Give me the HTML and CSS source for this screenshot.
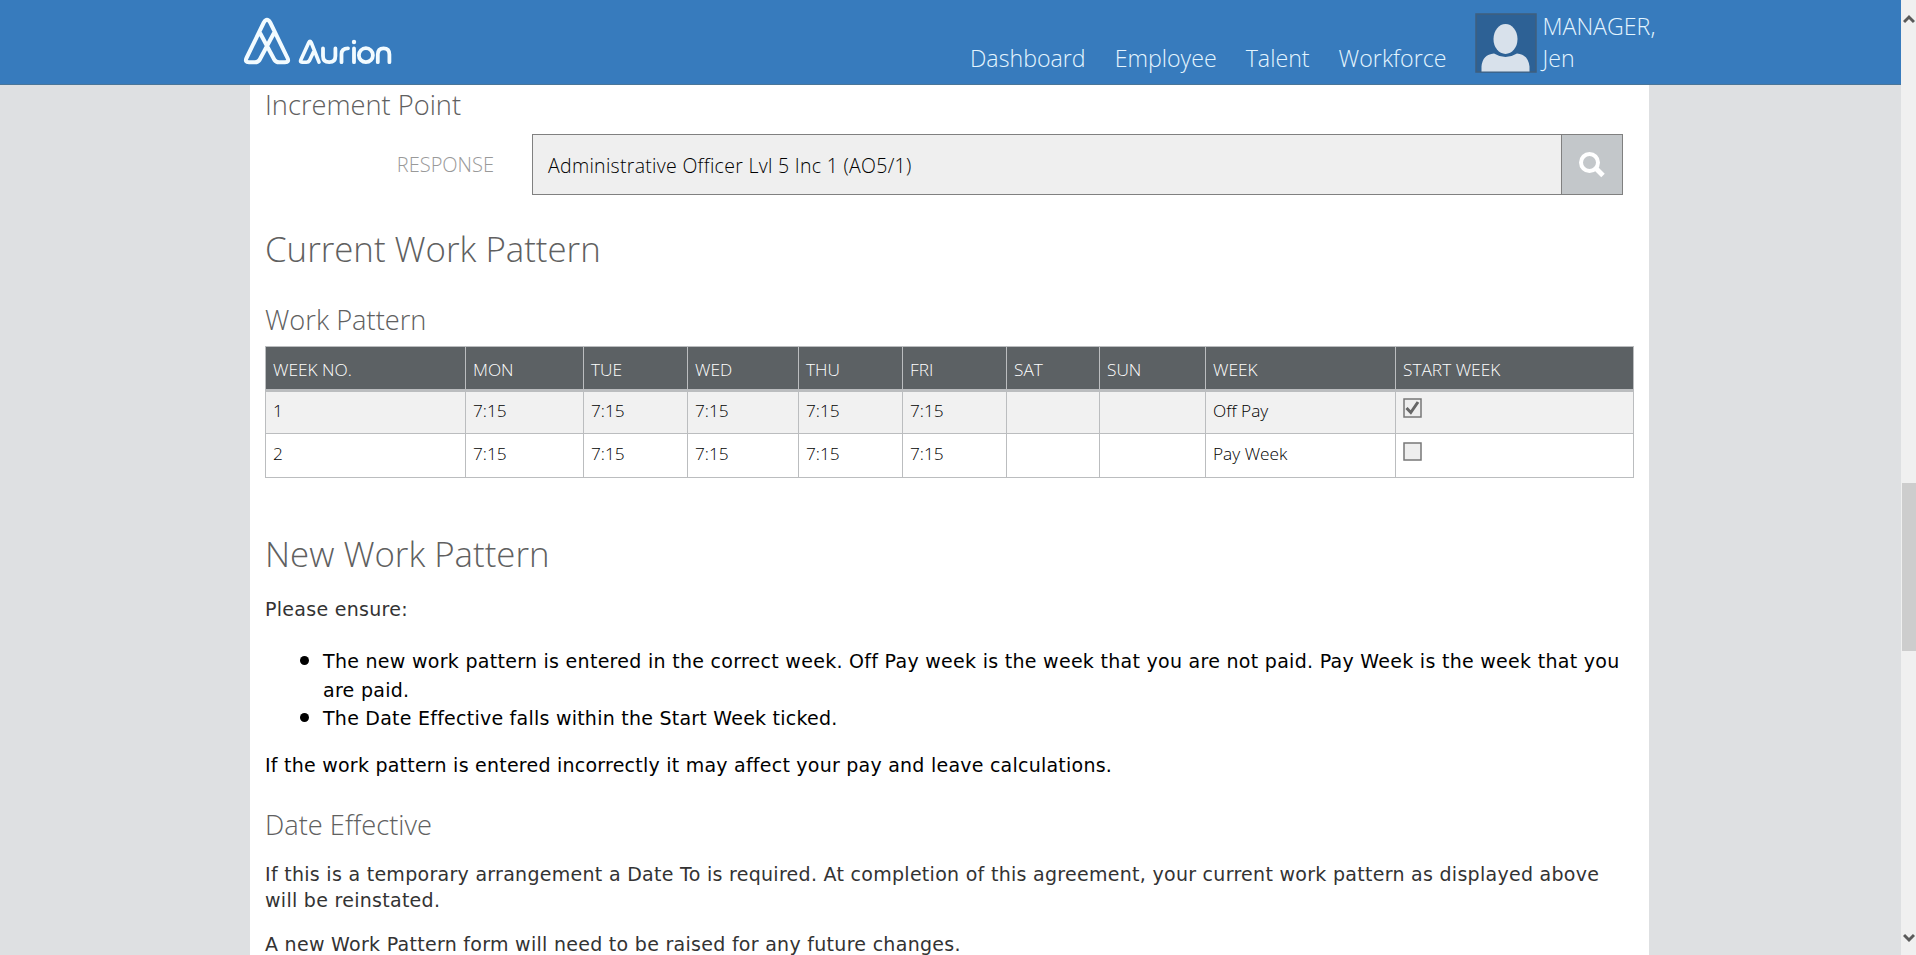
FILE: index.html
```html
<!DOCTYPE html>
<html lang="en">
<head>
<meta charset="utf-8">
<title>Aurion</title>
<link rel="stylesheet" href="styles.css">
</head>
<body>
<div class="window">
  <div class="page">
    <header class="topbar">
      <svg class="logo" width="160" height="56" viewBox="0 0 160 56" fill="none" stroke="#f2fbff" stroke-linecap="round" stroke-linejoin="round" role="img" aria-label="Aurion">
        <path stroke-width="4" d="M17.300 18.500 L31.500 45 Q33 47.200 36 47.200 H42 Q46.500 47.200 44.500 43 L27.200 7.500 Q24 2 20.800 7.500 L3.500 43 Q1.500 47.200 6 47.200 H12 Q15 47.200 16.500 45 L30.700 18.500"/>
        <path stroke-width="3.600" d="M76 47.200 L68.200 27.500 Q67 25 65.800 27.500 L57.800 45 Q56.800 47.200 59 47.200 H63.500 Q65.500 47.200 66.500 45.500 L70.500 37"/>
        <path stroke-width="3.800" d="M80 33.500 V41 Q80 47.200 86.200 47.200 Q92.400 47.200 92.400 41 V33.500 M98.500 47.200 V39 Q98.500 33.300 105 33.300 M111 33.500 V47.200 M134.800 47.200 V39.500 Q134.800 33.300 140.600 33.300 Q146.400 33.300 146.400 39.500 V47.200"/>
        <circle cx="122.900" cy="40.200" r="7" stroke-width="3.800"/>
        <circle cx="111" cy="27" r="2.200" fill="#f2fbff" stroke="none"/>
      </svg>
      <nav class="nav">
        <a>Dashboard</a>
        <a>Employee</a>
        <a>Talent</a>
        <a>Workforce</a>
      </nav>
      <svg class="avatar" width="62" height="60" viewBox="0 0 62 60">
        <rect x="1" y="1" width="60" height="58" fill="#2d6195" stroke="#3f5f7e" stroke-width="1.500"/>
        <ellipse cx="30.500" cy="26" rx="12" ry="15" fill="#d8e1eb"/>
        <path fill="#d8e1eb" d="M6.500 58.500 V53.500 Q7.500 41.500 19 40.500 Q30.500 47.500 42 40.500 Q53 41.500 54.500 53.500 V58.500 Z"/>
      </svg>
      <div class="user">MANAGER,<br>Jen</div>
    </header>
    <main class="panel">
      <h2 class="field-title">Increment Point</h2>
      <div class="field">
        <label class="field-label">RESPONSE</label>
        <div class="lookup">
          <div class="lookup-value">Administrative Officer Lvl 5 Inc 1 (AO5/1)</div>
          <div class="lookup-button">
            <svg width="28" height="28" viewBox="0 0 28 28" fill="none" stroke="#fff"><circle cx="11.500" cy="12.500" r="8.500" stroke-width="4"/><path stroke-width="5" d="M18 18.500 L25 25.500"/></svg>
          </div>
        </div>
      </div>
      <h1 class="section-title current">Current Work Pattern</h1>
      <h2 class="field-title pattern">Work Pattern</h2>
      <table class="grid">
        <colgroup><col class="c1"><col class="c2"><col class="c3"><col class="c4"><col class="c5"><col class="c6"><col class="c7"><col class="c8"><col class="c9"><col class="c10"></colgroup>
        <thead><tr><th>WEEK NO.</th><th>MON</th><th>TUE</th><th>WED</th><th>THU</th><th>FRI</th><th>SAT</th><th>SUN</th><th>WEEK</th><th>START WEEK</th></tr></thead>
        <tbody>
          <tr class="odd"><td>1</td><td>7:15</td><td>7:15</td><td>7:15</td><td>7:15</td><td>7:15</td><td></td><td></td><td>Off Pay</td><td><svg class="check checked" width="19" height="20" viewBox="0 0 19 20"><rect x="1" y="1" width="17" height="18" fill="#eee" stroke="#777" stroke-width="1.500"/><path d="M3.500 10 L7.800 14.500 L15 4" fill="none" stroke="#666" stroke-width="3"/></svg></td></tr>
          <tr class="even"><td>2</td><td>7:15</td><td>7:15</td><td>7:15</td><td>7:15</td><td>7:15</td><td></td><td></td><td>Pay Week</td><td><svg class="check" width="19" height="19" viewBox="0 0 19 19"><rect x="1" y="1" width="17" height="17" fill="#eee" stroke="#777" stroke-width="1.500"/></svg></td></tr>
        </tbody>
      </table>
      <h1 class="section-title new">New Work Pattern</h1>
      <p class="text ensure">Please ensure:</p>
      <ul class="notes">
        <li>The new work pattern is entered in the correct week. Off Pay week is the week that you are not paid. Pay Week is the week that you<br>are paid.</li>
        <li class="short">The Date Effective falls within the Start Week ticked.</li>
      </ul>
      <p class="text strong">If the work pattern is entered incorrectly it may affect your pay and leave calculations.</p>
      <h2 class="field-title date">Date Effective</h2>
      <p class="text temp">If this is a temporary arrangement a Date To is required. At completion of this agreement, your current work pattern as displayed above<br>will be reinstated.</p>
      <p class="text">A new Work Pattern form will need to be raised for any future changes.</p>
    </main>
  </div>
  <div class="scrollbar">
    <svg width="12" height="10" viewBox="0 0 12 10" fill="none" stroke="#5a5a5a" stroke-width="3"><path d="M1 8 L6 3 L11 8"/></svg>
    <div class="thumb"></div>
    <svg class="down" width="12" height="10" viewBox="0 0 12 10" fill="none" stroke="#5a5a5a" stroke-width="3"><path d="M1 2 L6 7 L11 2"/></svg>
  </div>
</div>
</body>
</html>
```

FILE: styles.css
```css
* { box-sizing: border-box; }
body { margin: 0; background: #dee0e2; font-family: "Open Sans", sans-serif; font-weight: 300; }
.window { display: flex; width: 1916px; height: 955px; overflow: hidden; }
.page { width: 1901px; height: 955px; overflow: hidden; }
.topbar { display: flex; height: 85px; background: #377bbd; border-bottom: 1px solid #4a7699; color: #e4f5ff; font-size: 23.2px; }
.logo { flex: none; margin: 15px 0 0 243px; }
.nav { display: flex; gap: 29px; margin-left: 567px; padding-top: 42px; line-height: 32px; }
.avatar { flex: none; margin: 13px 0 0 29px; }
.user { margin-left: 5px; padding-top: 10px; font-size: 23.2px; line-height: 32px; }
.panel { width: 1399px; height: 870px; margin-left: 250px; padding: 2px 15px 0; background: #fff; }
h1, h2, p, ul { margin: 0; font-weight: 300; }
.field-title { height: 36px; font-size: 27.25px; line-height: 36px; color: #606060; white-space: nowrap; }
.field { display: flex; margin-top: 11px; height: 61px; }
.field-label { width: 267px; padding-right: 38px; text-align: right; font-size: 20px; line-height: 62px; color: #999; }
.lookup { display: flex; width: 1091px; border: 1.5px solid #808080; }
.lookup-value { flex: 1; padding-left: 15px; background: #efefef; font-size: 19.5px; letter-spacing: .29px; line-height: 61px; color: #000; }
.lookup-button { width: 61px; padding: 15px 16px; background: #c3c7ca; border-left: 1px solid #808080; }
.section-title { font-size: 34.8px; height: 48px; line-height: 48px; color: #606060; white-space: nowrap; }
.current { margin-top: 30px; }
.pattern { margin-top: 29px; }
.grid { margin-top: 8px; width: 1368px; table-layout: fixed; border-collapse: collapse; font-size: 17.3px; }
.grid th, .grid td { padding: 0 0 0 7px; text-align: left; vertical-align: top; font-weight: 300; border: 1px solid #bbbdbf; white-space: nowrap; }
.grid th { height: 44px; padding-top: 10px; line-height: 26px; background: #5c6164; color: #fff; border-bottom: 3px solid #bbbdbf; }
.grid td { height: 43px; padding-top: 7px; line-height: 24px; color: #000; }
.grid .even td { height: 44px; padding-top: 8px; }
.odd { background: #f1f1f1; }
.check { display: block; }
.checked { margin-top: -1px; }
.c1 { width: 200px; } .c2 { width: 118px; } .c3 { width: 104px; } .c4 { width: 111px; } .c5 { width: 104px; }
.c6 { width: 104px; } .c7 { width: 93px; } .c8 { width: 106px; } .c9 { width: 190px; } .c10 { width: 238px; }
.new { margin-top: 52px; }
.text, .notes { font-family: "DejaVu Sans", sans-serif; font-weight: 400; font-size: 19px; letter-spacing: .285px; line-height: 26px; color: #333; white-space: nowrap; }
.ensure { margin-top: 18px; }
.notes { margin-top: 25px; padding-left: 58px; color: #000; line-height: 28.7px; list-style: none; }
.notes li { position: relative; }
.notes .short { letter-spacing: .24px; }
.notes li::before { content: ""; position: absolute; left: -23px; top: 9px; width: 9px; height: 9px; border-radius: 50%; background: #000; }
.strong { margin-top: 18.5px; color: #000; letter-spacing: .235px; }
.date { margin-top: 29px; }
.temp { margin: 18px 0; }
.scrollbar { display: flex; flex-direction: column; align-items: center; width: 15px; padding: 14px 0 12px; background: #f0f0f0; }
.thumb { width: 14px; height: 168px; margin-top: 459px; background: #cdcdcd; }
.down { margin-top: auto; }
```
